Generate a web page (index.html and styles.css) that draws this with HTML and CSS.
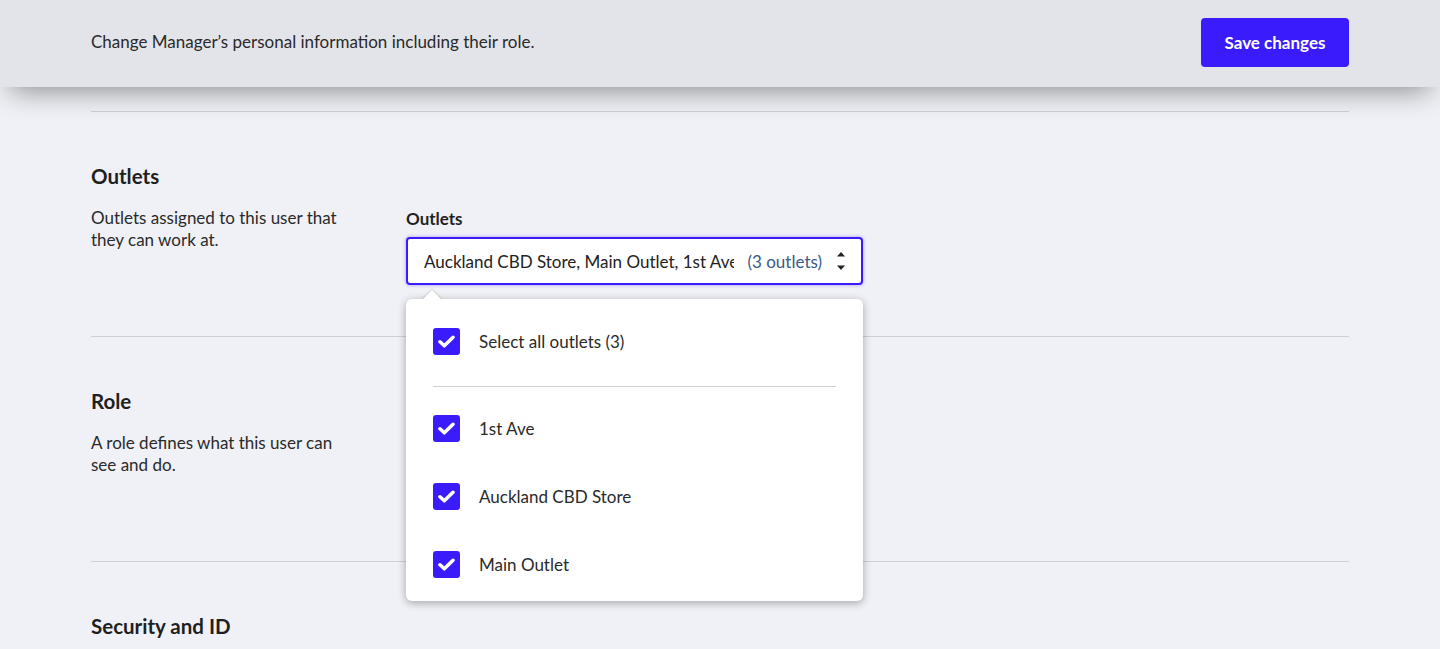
FILE: index.html
```html
<!DOCTYPE html>
<html lang="en">
<head>
<meta charset="utf-8">
<title>Edit user</title>
<link rel="stylesheet" href="styles.css">
</head>
<body>
<header class="topbar">
  <p class="topbar-text">Change Manager’s personal information including their role.</p>
  <button class="btn-primary" type="button">Save changes</button>
</header>
<main class="content">
  <section class="section">
    <div class="section-info">
      <h2 class="section-title">Outlets</h2>
      <p class="section-desc">Outlets assigned to this user that they can work at.</p>
    </div>
    <div class="section-fields">
      <label class="field-label">Outlets</label>
      <div class="multiselect">
        <div class="ms-input">
          <span class="ms-value">Auckland CBD Store, Main Outlet, 1st Ave</span>
          <span class="ms-count">(3 outlets)</span>
          <svg class="ms-arrows" width="10" height="24" viewBox="0 0 10 24"><path d="M1 7.5 L5 3 L9 7.5 Z" fill="#222"/><path d="M1 16.5 L5 21 L9 16.5 Z" fill="#222"/></svg>
        </div>
        <div class="ms-pointer"></div>
        <div class="ms-dropdown">
          <div class="ms-option">
            <span class="checkbox"><svg width="17" height="13" viewBox="0 0 17 13"><path d="M2 6.8 L6.3 10.8 L15 2.3" fill="none" stroke="#fff" stroke-width="3.5" stroke-linecap="round" stroke-linejoin="round"/></svg></span>
            <span class="ms-option-label">Select all outlets (3)</span>
          </div>
          <div class="ms-divider"></div>
          <div class="ms-option">
            <span class="checkbox"><svg width="17" height="13" viewBox="0 0 17 13"><path d="M2 6.8 L6.3 10.8 L15 2.3" fill="none" stroke="#fff" stroke-width="3.5" stroke-linecap="round" stroke-linejoin="round"/></svg></span>
            <span class="ms-option-label">1st Ave</span>
          </div>
          <div class="ms-option">
            <span class="checkbox"><svg width="17" height="13" viewBox="0 0 17 13"><path d="M2 6.8 L6.3 10.8 L15 2.3" fill="none" stroke="#fff" stroke-width="3.5" stroke-linecap="round" stroke-linejoin="round"/></svg></span>
            <span class="ms-option-label">Auckland CBD Store</span>
          </div>
          <div class="ms-option">
            <span class="checkbox"><svg width="17" height="13" viewBox="0 0 17 13"><path d="M2 6.8 L6.3 10.8 L15 2.3" fill="none" stroke="#fff" stroke-width="3.5" stroke-linecap="round" stroke-linejoin="round"/></svg></span>
            <span class="ms-option-label">Main Outlet</span>
          </div>
        </div>
      </div>
    </div>
  </section>
  <section class="section">
    <div class="section-info">
      <h2 class="section-title">Role</h2>
      <p class="section-desc">A role defines what this user can see and do.</p>
    </div>
    <div class="section-fields"></div>
  </section>
  <section class="section">
    <div class="section-info">
      <h2 class="section-title">Security and ID</h2>
    </div>
    <div class="section-fields"></div>
  </section>
</main>
</body>
</html>
```

FILE: styles.css
```css
* { box-sizing: border-box; }
html, body { margin: 0; padding: 0; }
body {
  background: #f0f1f6;
  font-family: Lato, "Open Sans", Arial, sans-serif;
  color: #2a2a2a;
  font-size: 17px;
  overflow: hidden;
}
.topbar {
  position: relative;
  z-index: 5;
  height: 87px;
  background: #e3e4e9;
  display: flex;
  align-items: center;
  justify-content: space-between;
  padding: 0 91px 3px;
  box-shadow: 0 14px 28px -10px rgba(0, 0, 0, 0.42);
}
.topbar-text {
  margin: 0;
  font-size: 17px;
  line-height: 22px;
  color: #2a2a2a;
}
.btn-primary {
  height: 49px;
  width: 148px;
  padding: 0;
  margin-top: 1px;
  border: 0;
  border-radius: 4px;
  background: #3a1bfc;
  color: #fff;
  font-family: Lato, "Open Sans", Arial, sans-serif;
  font-weight: 700;
  font-size: 17px;
}
.content {
  padding: 24px 91px 0;
}
.section {
  display: grid;
  grid-template-columns: 315px 1fr;
  border-top: 1px solid #cfd0d6;
  min-height: 225px;
  padding-top: 52px;
}
.section-title {
  margin: 0;
  font-size: 20.5px;
  line-height: 24px;
  font-weight: 700;
  color: #1f1f1f;
}
.section-desc {
  margin: 19px 0 0;
  max-width: 265px;
  font-size: 17px;
  line-height: 22px;
  color: #2a2a2a;
}
.section-fields {
  padding-top: 43px;
}
.field-label {
  display: block;
  font-weight: 700;
  font-size: 17px;
  line-height: 22px;
  color: #1f1f1f;
  padding-top: 1px;
}
.multiselect {
  position: relative;
  width: 457px;
  margin-top: 7px;
}
.ms-input {
  height: 48px;
  border: 2px solid #3a1bfc;
  border-radius: 4px;
  background: #fff;
  display: flex;
  align-items: center;
  padding: 0 15px 0 16px;
  gap: 13px;
  box-shadow: 0 0 3px 1px rgba(58, 27, 252, 0.25);
}
.ms-value {
  flex: 1;
  min-width: 0;
  white-space: nowrap;
  overflow: hidden;
  color: #222;
  font-size: 17px;
}
.ms-count {
  color: #3b5a87;
  font-size: 17px;
  white-space: nowrap;
}
.ms-arrows {
  flex: none;
  margin-left: 1px;
}
.ms-pointer {
  position: absolute;
  left: 19px;
  top: 56px;
  width: 14px;
  height: 14px;
  background: #fff;
  transform: rotate(45deg);
  box-shadow: -1px -1px 2px rgba(0, 0, 0, 0.12);
  z-index: 3;
}
.ms-dropdown {
  position: absolute;
  left: 0;
  top: 62px;
  width: 457px;
  background: #fff;
  border-radius: 6px;
  box-shadow: 0 2px 8px rgba(0, 0, 0, 0.32);
  padding: 8px 27px 3px;
  z-index: 2;
}
.ms-option {
  height: 68px;
  display: flex;
  align-items: center;
  gap: 19px;
}
.checkbox {
  width: 27px;
  height: 27px;
  border-radius: 3px;
  background: #3a1bfc;
  display: flex;
  align-items: center;
  justify-content: center;
  flex: none;
}
.ms-option-label {
  font-size: 17px;
  color: #2a2a2a;
}
.ms-divider {
  height: 1px;
  background: #cfd0d6;
  margin: 11px 0 7px;
}
```
